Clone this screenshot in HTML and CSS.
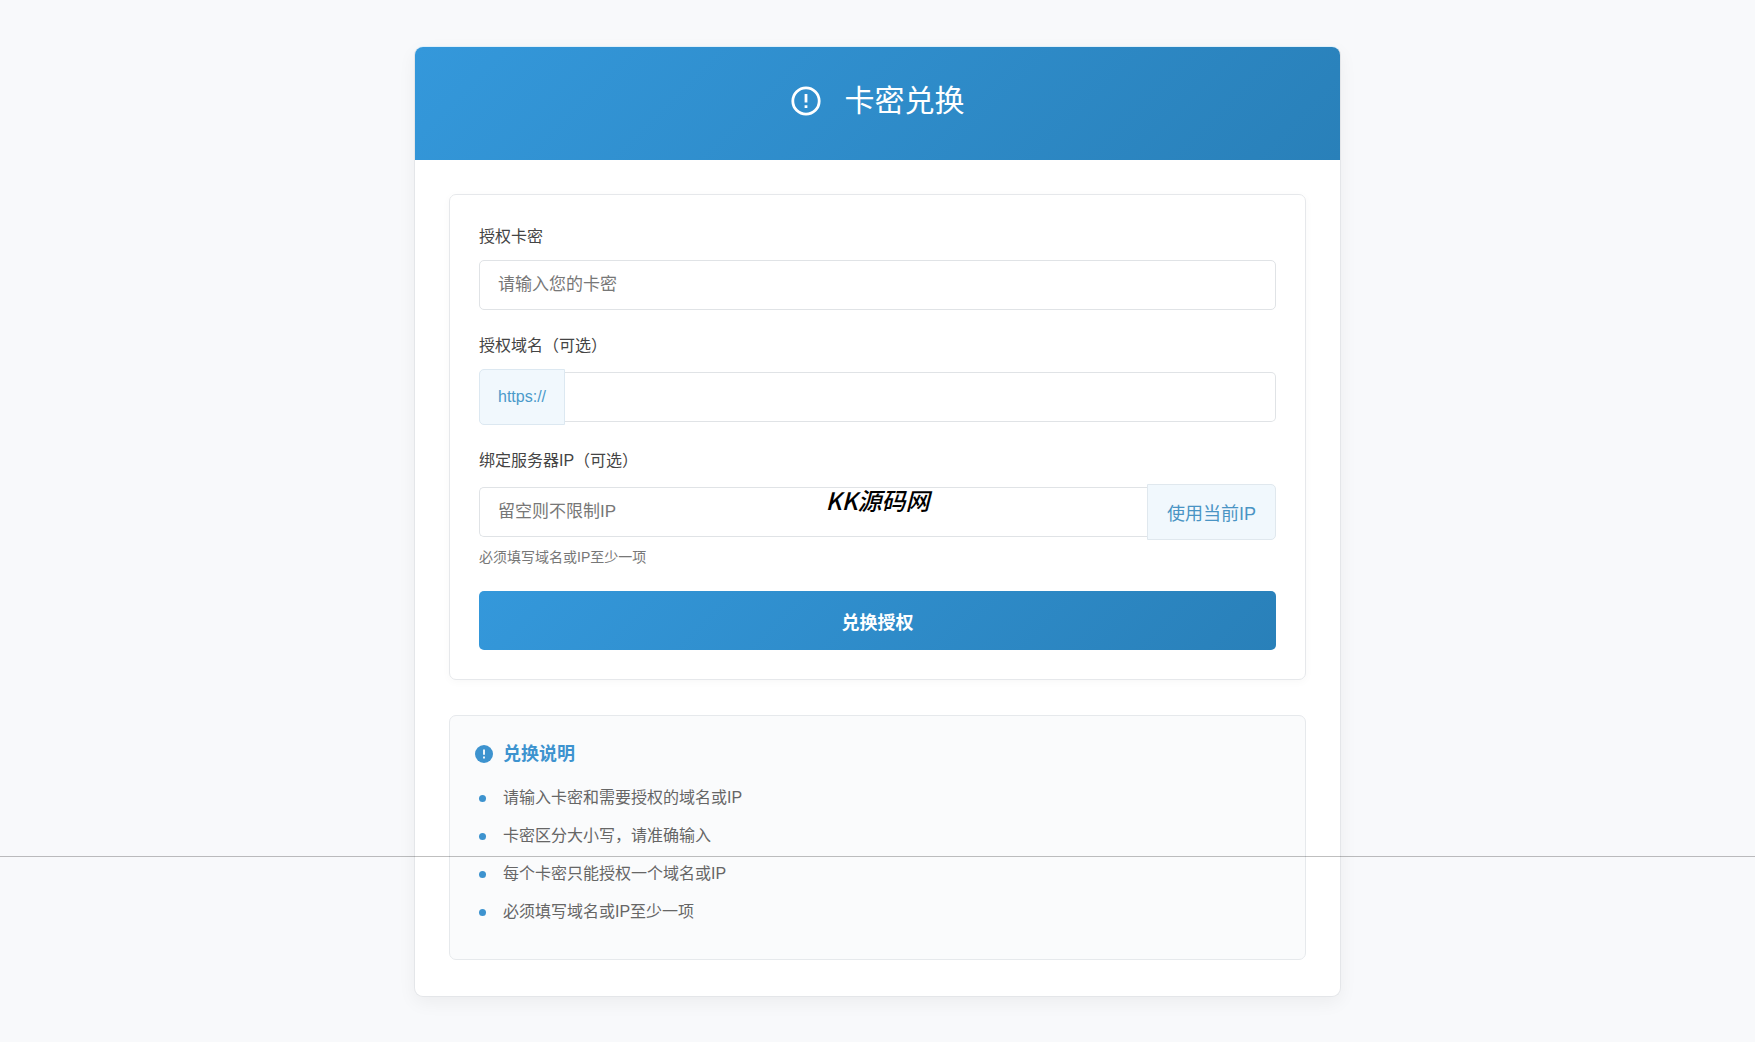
FILE: index.html
```html
<!DOCTYPE html>
<html lang="zh-CN">
<head>
    <meta charset="UTF-8">
    <meta name="viewport" content="width=device-width, initial-scale=1.0">
    <title>卡密兑换</title>
    <link rel="stylesheet" href="styles.css">
</head>
<body>
    <main class="card">
        <header class="card-header">
            <svg class="header-icon" viewBox="0 0 30 30" aria-hidden="true">
                <circle cx="15" cy="15" r="13.2" fill="none" stroke="currentColor" stroke-width="2.8"/>
                <path d="M15 8v8.5M15 19.3v2.8" fill="none" stroke="currentColor" stroke-width="2.8"/>
            </svg>
            <h1>卡密兑换</h1>
        </header>
        <div class="card-body">
            <form class="redeem-form">
                <div class="form-group">
                    <label for="cardKey">授权卡密</label>
                    <input type="text" id="cardKey" class="form-control" placeholder="请输入您的卡密">
                </div>

                <div class="form-group">
                    <label for="domain">授权域名（可选）</label>
                    <div class="input-group">
                        <span class="input-prefix">https://</span>
                        <input type="text" id="domain" class="form-control">
                    </div>
                </div>

                <div class="form-group">
                    <label for="serverIp">绑定服务器IP（可选）</label>
                    <div class="input-group">
                        <input type="text" id="serverIp" class="form-control" placeholder="留空则不限制IP">
                        <button type="button" class="btn-ip">使用当前IP</button>
                    </div>
                    <p class="form-text">必须填写域名或IP至少一项</p>
                </div>

                <button type="submit" class="btn-submit">兑换授权</button>
            </form>

            <section class="notice">
                <h2>
                    <svg class="notice-icon" viewBox="0 0 18 18" aria-hidden="true">
                        <circle cx="9" cy="9" r="9" fill="currentColor"/>
                        <path d="M9 4.5v5.3M9 11.5v2" fill="none" stroke="#fff" stroke-width="1.8"/>
                    </svg>
                    兑换说明
                </h2>
                <ul>
                    <li>请输入卡密和需要授权的域名或IP</li>
                    <li>卡密区分大小写，请准确输入</li>
                    <li>每个卡密只能授权一个域名或IP</li>
                    <li>必须填写域名或IP至少一项</li>
                </ul>
            </section>
        </div>
    </main>

    <!-- Overlays -->
    <div class="watermark">KK源码网</div>
    <div class="divider"></div>
</body>
</html>
```
FILE: styles.css
```css
* {
    box-sizing: border-box;
}
body {
    position: relative;
    margin: 0;
    padding: 46px 20px;
    background-color: #f8f9fb;
    color: #444;
    font-family: "Liberation Sans", "Noto Sans CJK SC", sans-serif;
    font-size: 16px;
    line-height: 26px;
}
h1, h2, p, ul {
    margin: 0;
    padding: 0;
}
.card {
    max-width: 927px;
    margin: 0 auto;
    background: #fff;
    border: 1px solid #e4e6e9;
    border-top-color: #dff0fa;
    border-radius: 9px;
    box-shadow: 0 6px 18px rgba(0, 0, 0, 0.05);
    overflow: hidden;
}
.card-header {
    display: flex;
    align-items: center;
    justify-content: center;
    gap: 24px;
    padding: 30px 30px 35px;
    background: linear-gradient(135deg, #3498db, #2980b9);
    color: #fff;
}
.card-header h1 {
    font-size: 30px;
    font-weight: 400;
    line-height: 48px;
}
.header-icon {
    width: 30px;
    height: 30px;
}
.card-body {
    padding: 34px 34px 36px;
}
.redeem-form {
    padding: 29px;
    border: 1px solid #e6e8eb;
    border-radius: 7px;
    box-shadow: 0 2px 8px rgba(0, 0, 0, 0.03);
}
.form-group {
    margin-bottom: 23px;
}
.form-group label {
    display: block;
    margin-bottom: 10px;
}
.form-control {
    display: block;
    width: 100%;
    height: 50px;
    padding: 0 18px;
    background: #fff;
    border: 1px solid #e0e3e6;
    border-radius: 5px;
    color: #444;
    font-family: inherit;
    font-size: 17px;
    outline: none;
}
.form-control::placeholder {
    color: #777;
}
.form-control:focus {
    border-color: #3498db;
}
.input-group {
    display: flex;
    align-items: center;
}
.input-group .form-control {
    flex: 1;
    min-width: 0;
}
.input-prefix + .form-control {
    border-left: none;
    border-radius: 0 5px 5px 0;
}
.input-prefix {
    padding: 14px 18px;
    background: #f1f8fd;
    border: 1px solid #dce8f1;
    border-radius: 5px 0 0 5px;
    color: #4a9aca;
}
.btn-ip {
    height: 56px;
    padding: 0 19px;
    background: #f1f8fd;
    border: 1px solid #e0e8ee;
    border-radius: 0 5px 5px 0;
    color: #4a94c4;
    font-family: inherit;
    font-size: 18px;
    cursor: pointer;
}
#serverIp {
    border-right: none;
    border-radius: 5px 0 0 5px;
}
.form-text {
    margin-top: 6px;
    color: #777;
    font-size: 14px;
    line-height: 22px;
}
.btn-submit {
    display: block;
    width: 100%;
    height: 59px;
    background: linear-gradient(135deg, #3498db, #2980b9);
    border: none;
    border-radius: 5px;
    color: #fff;
    font-family: inherit;
    font-size: 18px;
    font-weight: 700;
    cursor: pointer;
}
.notice {
    margin-top: 35px;
    padding: 24px 25px 22px;
    background: #fafbfc;
    border: 1px solid #e6e9ec;
    border-radius: 7px;
}
.notice h2 {
    display: flex;
    align-items: center;
    gap: 10px;
    margin-bottom: 17px;
    color: #3d93cf;
    font-size: 18px;
    line-height: 28px;
}
.notice-icon {
    width: 18px;
    height: 18px;
}
.notice ul {
    list-style: none;
}
.notice li {
    position: relative;
    margin-bottom: 12px;
    padding-left: 28px;
    color: #666;
}
.notice li::before {
    content: "";
    position: absolute;
    top: 10px;
    left: 4px;
    width: 7px;
    height: 7px;
    background: #3d93cf;
    border-radius: 50%;
}
.watermark {
    position: absolute;
    top: 485px;
    left: 0;
    right: 0;
    color: #000;
    font-family: "Noto Sans CJK SC", sans-serif;
    font-size: 24px;
    font-style: italic;
    font-weight: 500;
    line-height: 30px;
    text-align: center;
    pointer-events: none;
}
.divider {
    position: absolute;
    top: 856px;
    left: 0;
    right: 0;
    height: 1px;
    background: rgba(0, 0, 0, 0.25);
}
```
